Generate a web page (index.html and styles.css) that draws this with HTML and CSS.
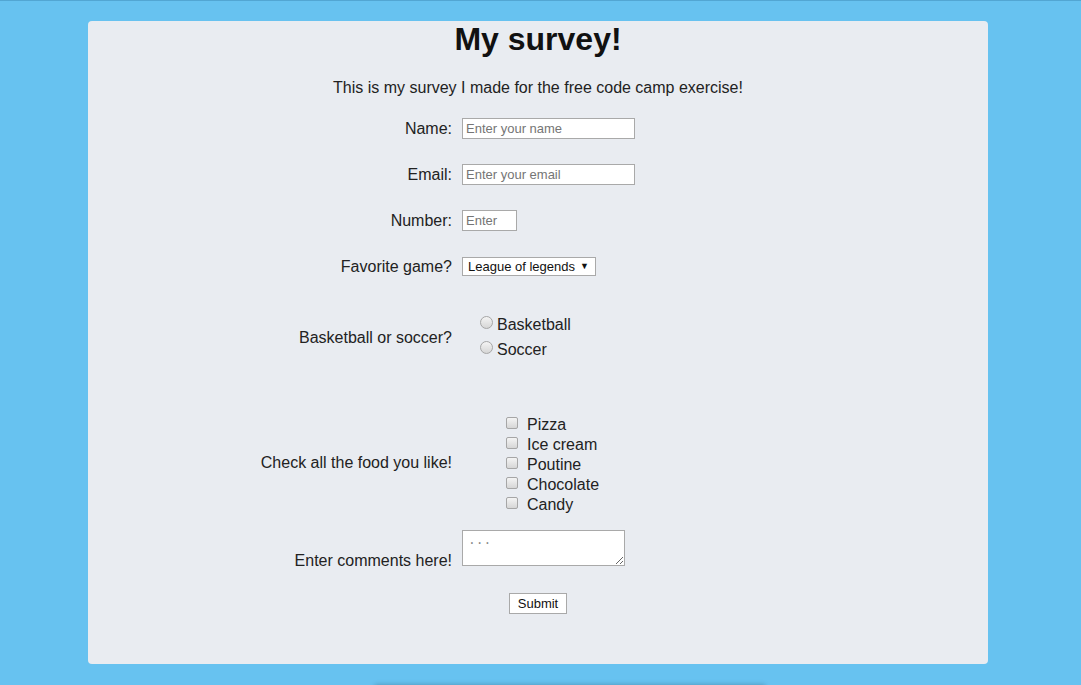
FILE: index.html
```html
<!DOCTYPE html>
<html lang="en">
<head>
<meta charset="utf-8">
<title>My survey!</title>
<link rel="stylesheet" href="styles.css">
</head>
<body>
<div class="topline"></div>
<main class="card">
  <h1 class="title">My survey!</h1>
  <p class="intro">This is my survey I made for the free code camp exercise!</p>
  <form class="form">
    <div class="row row-name">
      <label class="label" for="name">Name:</label>
      <input class="text-input" id="name" type="text" placeholder="Enter your name">
    </div>
    <div class="row row-gap">
      <label class="label" for="email">Email:</label>
      <input class="text-input" id="email" type="email" placeholder="Enter your email">
    </div>
    <div class="row row-gap">
      <label class="label" for="number">Number:</label>
      <input class="text-input num-input" id="number" type="text" placeholder="Enter">
    </div>
    <div class="row row-select">
      <label class="label" for="game">Favorite game?</label>
      <span class="select-wrap">
        <select class="select" id="game">
          <option>League of legends</option>
        </select>
      </span>
    </div>
    <div class="row row-radio">
      <span class="label label-radio">Basketball or soccer?</span>
      <div class="radio-group">
        <label class="option radio-option"><input class="radio" type="radio" name="sport">Basketball</label>
        <label class="option radio-option"><input class="radio" type="radio" name="sport">Soccer</label>
      </div>
    </div>
    <div class="row row-check">
      <span class="label label-check">Check all the food you like!</span>
      <div class="check-group">
        <label class="option check-option"><input class="check" type="checkbox">Pizza</label>
        <label class="option check-option"><input class="check" type="checkbox">Ice cream</label>
        <label class="option check-option"><input class="check" type="checkbox">Poutine</label>
        <label class="option check-option"><input class="check" type="checkbox">Chocolate</label>
        <label class="option check-option"><input class="check" type="checkbox">Candy</label>
      </div>
    </div>
    <div class="row row-comments">
      <label class="label label-bottom" for="comments">Enter comments here!</label>
      <textarea class="comments" id="comments" placeholder="..."></textarea>
    </div>
    <div class="submit-row">
      <button class="submit" type="button">Submit</button>
    </div>
  </form>
</main>
<div class="below"></div>
</body>
</html>
```

FILE: styles.css
```css
html, body {
  margin: 0;
  padding: 0;
}

body {
  background: #67c2f0;
  font-family: "Liberation Sans", Arial, sans-serif;
  color: #222;
  overflow: hidden;
}

.topline {
  height: 1px;
  background: #52a6d3;
}

.card {
  width: 900px;
  margin: 20px 0 0 88px;
  background: #e9ecf1;
  border-radius: 4px;
  padding: 0 0 50px;
  box-sizing: border-box;
}

.title {
  margin: 0;
  font-size: 32px;
  line-height: 37px;
  font-weight: bold;
  text-align: center;
  color: #111;
}

.intro {
  margin: 21px 0 0;
  font-size: 16px;
  line-height: 18px;
  text-align: center;
}

.form {
  display: flex;
  flex-direction: column;
}

.row {
  display: flex;
  align-items: center;
  gap: 10px;
  font-size: 16px;
}

.row-name { margin-top: 21px; }
.row-gap { margin-top: 25px; }
.row-select { margin-top: 25px; height: 21px; }
.row-radio { margin-top: 35px; }
.row-check { margin-top: 53px; }
.row-comments { margin-top: 15px; align-items: flex-end; }

.label {
  width: 364px;
  flex: none;
  text-align: right;
  line-height: 18px;
}

.label-radio {
  margin-top: 2px;
}

.label-check {
  margin-bottom: 4px;
}

.label-bottom {
  margin-bottom: -4px;
}

.text-input {
  width: 173px;
  height: 21px;
  box-sizing: border-box;
  margin: 0;
  border: 1px solid #a9a9a9;
  padding: 1px 3px;
  background: #fff;
  font-family: "Liberation Sans", Arial, sans-serif;
  font-size: 13px;
  color: #222;
  outline: none;
}

.text-input::placeholder {
  color: #757575;
}

.num-input {
  width: 55px;
}

.select-wrap {
  position: relative;
  display: inline-block;
  height: 19px;
}

.select {
  appearance: none;
  -webkit-appearance: none;
  width: 134px;
  height: 19px;
  box-sizing: border-box;
  margin: 0;
  border: 1px solid #a9a9a9;
  border-radius: 0;
  padding: 0 0 0 5px;
  background: #fff;
  font-family: "Liberation Sans", Arial, sans-serif;
  font-size: 13px;
  line-height: 17px;
  color: #111;
  outline: none;
}

.select-wrap::after {
  content: "\25BC";
  position: absolute;
  right: 7px;
  top: 3px;
  font-size: 9px;
  line-height: 12px;
  color: #111;
  pointer-events: none;
}

.radio-group {
  display: flex;
  flex-direction: column;
  padding-left: 18px;
}

.check-group {
  display: flex;
  flex-direction: column;
  padding-left: 44px;
}

.option {
  display: flex;
  align-items: center;
  font-size: 16px;
}

.radio-option {
  height: 25px;
}

.check-option {
  height: 20px;
}

.radio {
  appearance: none;
  -webkit-appearance: none;
  width: 13px;
  height: 13px;
  margin: -4px 4px 0 0;
  border: 1px solid #a6a6a6;
  border-radius: 50%;
  background: linear-gradient(#f4f4f4, #d6d6d6);
  box-sizing: border-box;
}

.check {
  appearance: none;
  -webkit-appearance: none;
  width: 12px;
  height: 12px;
  margin: -4px 9px 0 0;
  border: 1px solid #a6a6a6;
  border-radius: 2px;
  background: linear-gradient(#f4f4f4, #d6d6d6);
  box-sizing: border-box;
}

.comments {
  width: 163px;
  height: 36px;
  box-sizing: border-box;
  margin: 0;
  border: 1px solid #a9a9a9;
  padding: 2px 5px;
  background: #fff;
  font-family: "Liberation Mono", monospace;
  font-size: 13px;
  line-height: 15px;
  outline: none;
}

.comments::placeholder {
  color: #8a8a8a;
}

.submit-row {
  display: flex;
  justify-content: center;
  margin-top: 27px;
}

.submit {
  width: 58px;
  height: 21px;
  box-sizing: border-box;
  margin: 0;
  padding: 0;
  border: 1px solid #a9a9a9;
  border-radius: 0;
  background: #fff;
  font-family: "Liberation Sans", Arial, sans-serif;
  font-size: 13px;
  color: #111;
}

.below {
  width: 390px;
  height: 40px;
  margin: 22px 0 0 375px;
  background: #67c2f0;
  box-shadow: 0 -1px 5px rgba(0, 0, 0, 0.25);
}
```
